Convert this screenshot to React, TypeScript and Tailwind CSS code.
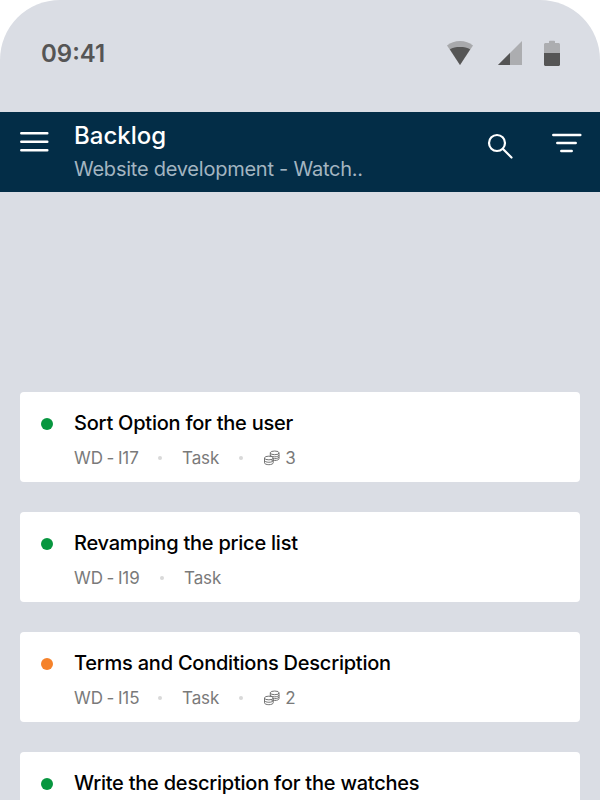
const Coins = () => (
  <svg width="16" height="16" viewBox="0 0 16.500 16" fill="none" stroke="#6f6f6f" strokeWidth="1" className="mr-[5px] -mt-[1px]">
    <ellipse cx="11" cy="2.700" rx="4.500" ry="1.900" />
    <path d="M6.500 2.700v6c0 1 2 1.900 4.500 1.900s4.500-.9 4.500-1.900v-6" />
    <path d="M6.500 4.900c0 1 2 1.900 4.500 1.900s4.500-.9 4.500-1.900M8 8.500c.8.300 1.900.3 3 .2 2.500 0 4.500-.9 4.500-1.900" />
    <ellipse cx="5" cy="8" rx="4.500" ry="1.900" fill="#fff" />
    <path d="M.5 8v5c0 1 2 1.900 4.500 1.900s4.500-.9 4.500-1.900V8M.5 10.500c0 1 2 1.900 4.500 1.900s4.500-.9 4.500-1.900" />
  </svg>
);

const Sep = ({ className }: { className: string }) => (
  <span className={`h-1 w-1 rounded-full bg-[#d9d9d9] ${className}`} />
);

type Item = { title: string; id: string; idW: string; dot: string; count?: number };

const items: Item[] = [
  { title: "Sort Option for the user", id: "WD - I17", idW: "w-[64px]", dot: "bg-[#07963f]", count: 3 },
  { title: "Revamping the price list", id: "WD - I19", idW: "w-[66px]", dot: "bg-[#07963f]" },
  { title: "Terms and Conditions Description", id: "WD - I15", idW: "w-[64px]", dot: "bg-[#f5822a]", count: 2 },
  { title: "Write the description for the watches", id: "WD - I12", idW: "w-[64px]", dot: "bg-[#07963f]" },
];

export default function App() {
  return (
    <div className="h-[800px] w-[600px] overflow-hidden bg-white font-['Inter',sans-serif]">
      <div className="h-full overflow-hidden rounded-t-[60px] bg-[#dadde4]">
        <div className="flex h-[112px] items-start justify-between pl-[41px] pr-[40px] pt-[39px]">
          <span className="text-[24px] font-semibold leading-[30px] text-[#555555]">09:41</span>
          <div className="flex">
            <svg width="28" height="28" viewBox="0 0 28 28" className="mr-[24px]">
              <path d="M1 6.500C4.500 3.600 9 2 14 2s9.500 1.600 13 4.500L14 26z" fill="#a8a9ac" />
              <path d="M3.800 10.200C6.500 8.500 10 8 14 8s7.500.5 10.200 2.200L14 26z" fill="#555555" />
            </svg>
            <svg width="24" height="24" viewBox="0 0 24 24" className="mr-[22px] mt-[2px]">
              <path d="M24 0v24H0z" fill="#acadb0" />
              <path d="M12 12v12H0z" fill="#555555" />
            </svg>
            <svg width="16" height="26" viewBox="0 0 16 26" className="mt-[1px]">
              <path d="M5 1.500c0-.5.300-.8.800-.8h4.400c.5 0 .8.300.8.800V3h3.500c.8 0 1.500.7 1.500 1.500V13H0V4.500C0 3.700.7 3 1.500 3H5z" fill="#acadb0" />
              <path d="M0 13h16v11.500c0 .8-.7 1.500-1.500 1.500h-13C.7 26 0 25.300 0 24.500z" fill="#555555" />
            </svg>
          </div>
        </div>

        <header className="flex h-[80px] items-start bg-[#032d47]">
          <svg width="30" height="22" viewBox="0 0 30 22" className="ml-[19px] mt-[19px]" stroke="#fff" strokeWidth="2.500" strokeLinecap="round">
            <path d="M2.300 2.300h26M2.300 10.800h26M2.300 19.300h26" />
          </svg>
          <div className="ml-[25px] flex-1 pt-[9px]">
            <div className="text-[24px] font-medium leading-[30px] text-white">Backlog</div>
            <div className="mt-[4px] text-[20px] leading-[28px] tracking-[-0.24px] text-[#a3b5c1]">Website development - Watch..</div>
          </div>
          <svg width="26" height="26" viewBox="0 0 26 26" fill="none" stroke="#fff" strokeWidth="2.200" strokeLinecap="round" className="mr-[39px] mt-[21px]">
            <circle cx="10" cy="10" r="8" />
            <path d="M16 16l8.500 8.500" />
          </svg>
          <svg width="30" height="22" viewBox="0 0 30 22" stroke="#fff" strokeWidth="2.500" strokeLinecap="round" className="mr-[18px] mt-[21px]">
            <path d="M1.300 2h27M5.300 10h18.400M9.300 18h10.400" />
          </svg>
        </header>

        <div className="flex flex-col gap-[30px] px-[20px] pt-[200px]">
          {items.map((it) => (
            <div key={it.id} className="flex h-[90px] shrink-0 rounded-[4px] bg-white pl-[21px] pt-[17px]">
              <span className={`mr-[21px] mt-[9px] h-3 w-3 rounded-full ${it.dot}`} />
              <div>
                <div className="text-[20px] font-[450] leading-[28px] tracking-[-0.23px] text-black">{it.title}</div>
                <div className="mt-[9px] flex items-center text-[17px] leading-[24px] tracking-[-0.1px] text-[#7a7a7a] [word-spacing:-1px]">
                  <span className={`whitespace-nowrap ${it.idW}`}>{it.id}</span>
                  <Sep className="mx-[20px]" />
                  <span>Task</span>
                  {it.count !== undefined && (
                    <>
                      <Sep className="ml-[20px] mr-[21px]" />
                      <Coins />
                      <span>{it.count}</span>
                    </>
                  )}
                </div>
              </div>
            </div>
          ))}
        </div>
      </div>
    </div>
  );
}
